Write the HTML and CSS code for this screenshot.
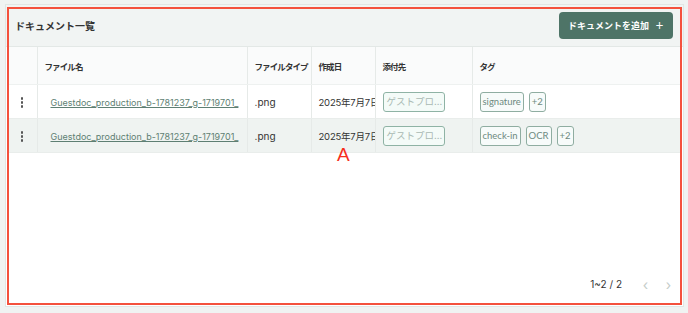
FILE: index.html
```html
<!DOCTYPE html>
<html lang="ja">
<head>
  <meta charset="UTF-8" />
  <title>ドキュメント一覧</title>
  <link rel="stylesheet" href="styles.css">
</head>
<body>
  <div class="card">
    <div class="card-head">
      <h2 class="title">ドキュメント一覧</h2>
      <button class="add-btn">ドキュメントを追加<span class="plus">＋</span></button>
    </div>

    <div class="table-wrap">
      <table class="doc-table">
        <colgroup>
          <col class="c-menu"><col class="c-name"><col class="c-type"><col class="c-date"><col class="c-att"><col>
        </colgroup>
        <thead>
          <tr>
            <th></th>
            <th>ファイル名</th>
            <th>ファイルタイプ</th>
            <th>作成日</th>
            <th>添付先</th>
            <th>タグ</th>
          </tr>
        </thead>
        <tbody>
          <tr>
            <td class="menu"><span class="dots"><i></i><i></i><i></i></span></td>
            <td><a class="file-link" href="#">Guestdoc_production_b-1781237_g-1719701_</a></td>
            <td>.png</td>
            <td class="date">2025年7月7日</td>
            <td><span class="chip attach">ゲストプロ...</span></td>
            <td><span class="chip">signature</span><span class="chip">+2</span></td>
          </tr>
          <tr class="alt">
            <td class="menu"><span class="dots"><i></i><i></i><i></i></span></td>
            <td><a class="file-link" href="#">Guestdoc_production_b-1781237_g-1719701_</a></td>
            <td>.png</td>
            <td class="date">2025年7月7日</td>
            <td><span class="chip attach">ゲストプロ...</span></td>
            <td><span class="chip">check-in</span><span class="chip">OCR</span><span class="chip">+2</span></td>
          </tr>
        </tbody>
      </table>
    </div>

    <div class="pager">
      <span class="count">1~2 / 2</span>
      <span class="arrow">&#8249;</span>
      <span class="arrow">&#8250;</span>
    </div>

    <div class="mark-box"></div>
    <div class="mark-letter">A</div>
  </div>
</body>
</html>
```

FILE: styles.css
```css
body {
  margin: 0;
  background-color: #f0f3f2;
  font-family: Inter, "Noto Sans CJK JP", sans-serif;
  color: #333;
}

.card {
  position: relative;
  margin: 4px 4px 0 5px;
  height: 303px;
  box-sizing: border-box;
  border: 1px solid #e1e6e4;
  background-color: white;
  display: flex;
  flex-direction: column;
}

.card-head {
  height: 42px;
  box-sizing: border-box;
  background-color: #f1f4f3;
  border-bottom: 1px solid #e3e8e6;
  display: flex;
  align-items: center;
  justify-content: space-between;
  padding: 0 10px 0 9px;
}

.title {
  margin: 0;
  font-size: 10px;
  font-weight: 700;
  color: #333;
}

.add-btn {
  height: 27px;
  padding: 0 9px 0 9px;
  border: none;
  border-radius: 4px;
  background-color: #4e7467;
  color: white;
  font-family: inherit;
  font-size: 9px;
  font-weight: 700;
  cursor: pointer;
}

.add-btn .plus {
  margin-left: 6px;
}

.table-wrap {
  flex: 1;
  padding: 0 2px 0 1px;
}

.doc-table {
  width: 100%;
  border-collapse: collapse;
  table-layout: fixed;
  font-size: 10px;
}

.c-menu { width: 30px; }
.c-name { width: 210px; }
.c-type { width: 64px; }
.c-date { width: 64px; }
.c-att { width: 97px; }

.doc-table th {
  height: 37px;
  text-align: left;
  font-size: 8.5px;
  font-weight: 700;
  letter-spacing: -0.9px;
  white-space: nowrap;
  padding: 0 7px;
  background-color: #fafbfb;
  border-left: 1px solid #e6eae8;
  border-bottom: 1px solid #eef1f0;
}

.doc-table td {
  height: 33px;
  padding: 0 7px;
  white-space: nowrap;
  overflow: hidden;
  border-left: 1px solid #e6eae8;
  border-bottom: 1px solid #e9edeb;
}

.doc-table th:first-child,
.doc-table td:first-child {
  border-left: none;
}

.doc-table tr.alt td {
  background-color: #eff3f1;
}

.doc-table td.date {
  padding-right: 0;
  font-size: 9.5px;
  letter-spacing: -0.2px;
}

.menu {
  text-align: center;
}

.dots {
  display: inline-flex;
  flex-direction: column;
  gap: 1.5px;
  vertical-align: middle;
}

.dots i {
  width: 2.5px;
  height: 2.5px;
  border-radius: 50%;
  background-color: #555;
}

.file-link {
  margin-left: 6px;
  color: #5e7f73;
  text-decoration: underline;
  font-size: 9px;
}

.chip {
  display: inline-block;
  box-sizing: border-box;
  height: 20px;
  line-height: 18px;
  padding: 0 2px;
  margin-right: 5px;
  border: 1px solid #8fada1;
  border-radius: 3px;
  background-color: #f7fbfa;
  color: #6d8a80;
  font-family: Lato, "Noto Sans CJK JP", sans-serif;
  font-size: 9.5px;
  vertical-align: middle;
}

.chip.attach {
  width: 62px;
  padding: 0 3px;
  color: #a9b9b3;
  border-color: #8fb3a5;
  background-color: #f4fbf8;
  font-family: Inter, "Noto Sans CJK JP", sans-serif;
}

.pager {
  display: flex;
  align-items: center;
  justify-content: flex-end;
  height: 44px;
  padding-right: 3px;
  font-size: 10px;
  color: #333;
}

.count {
  margin-right: 12px;
}

.arrow {
  width: 23px;
  text-align: center;
  font-size: 14px;
  color: #c4ccc9;
}

.mark-box {
  position: absolute;
  top: 2px;
  left: 1px;
  right: 1px;
  bottom: 1px;
  border: 2px solid #f4513d;
  pointer-events: none;
}

.mark-letter {
  position: absolute;
  top: 139px;
  left: 331px;
  font-family: "Liberation Sans", sans-serif;
  font-size: 19px;
  color: #f72d1c;
}
```
